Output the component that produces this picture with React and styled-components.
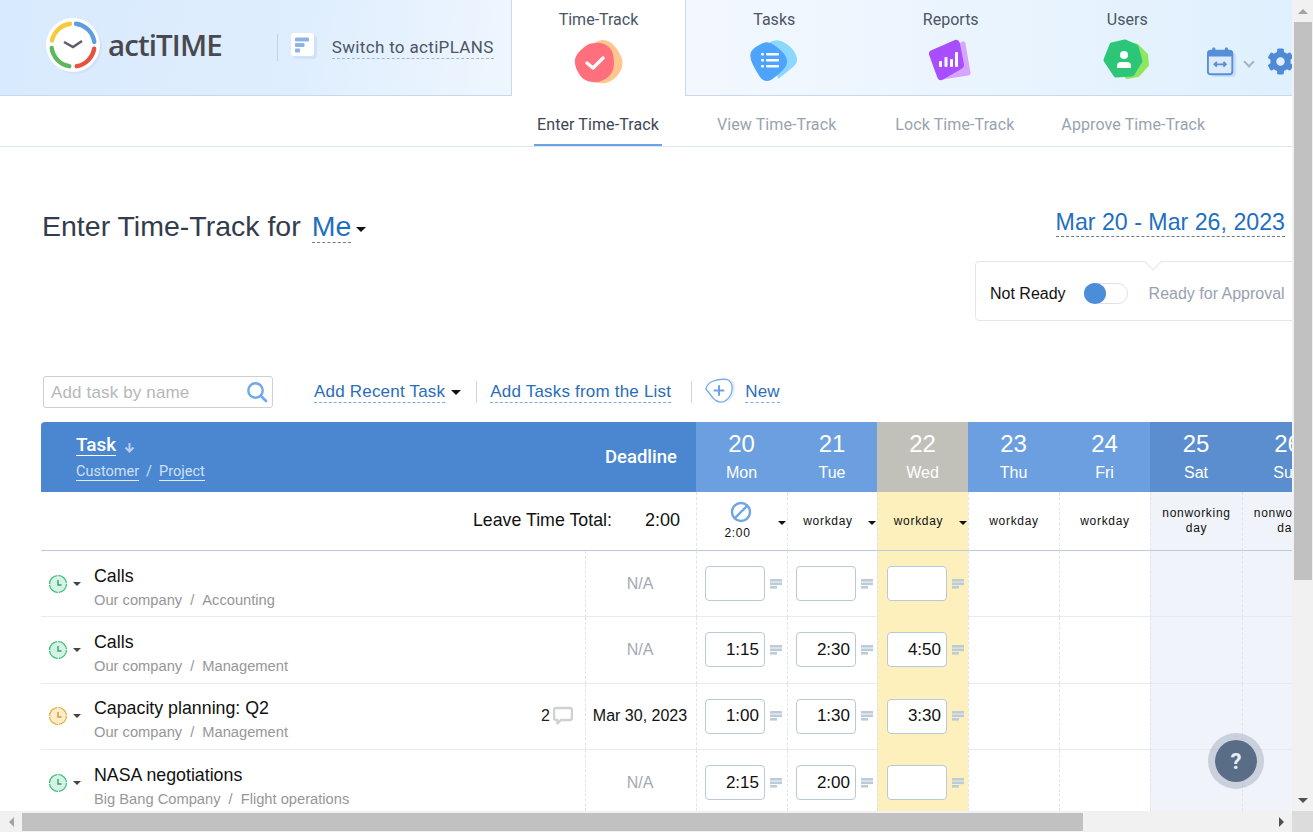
import React from 'react';
import styled, { createGlobalStyle } from 'styled-components';
import { FaCog } from 'react-icons/fa';

const GlobalStyle = createGlobalStyle`
  html, body {
    margin: 0;
    padding: 0;
    overflow: hidden;
    background: #fff;
  }
  * {
    box-sizing: border-box;
  }
`;

const ARIAL = `"Liberation Sans", Arial, sans-serif`;
const ROBOTO = `Roboto, "Liberation Sans", sans-serif`;

const rows = [
  { name: 'Calls', customer: 'Our company', project: 'Accounting', deadline: 'N/A', clock: 'green', times: ['', '', ''] },
  { name: 'Calls', customer: 'Our company', project: 'Management', deadline: 'N/A', clock: 'green', times: ['1:15', '2:30', '4:50'] },
  { name: 'Capacity planning: Q2', customer: 'Our company', project: 'Management', deadline: 'Mar 30, 2023', clock: 'orange', comments: 2, times: ['1:00', '1:30', '3:30'] },
  { name: 'NASA negotiations', customer: 'Big Bang Company', project: 'Flight operations', deadline: 'N/A', clock: 'green', times: ['2:15', '2:00', ''] },
];

const days = [
  { num: 20, name: 'Mon', kind: 'work' },
  { num: 21, name: 'Tue', kind: 'work' },
  { num: 22, name: 'Wed', kind: 'today' },
  { num: 23, name: 'Thu', kind: 'work' },
  { num: 24, name: 'Fri', kind: 'work' },
  { num: 25, name: 'Sat', kind: 'off' },
  { num: 26, name: 'Sun', kind: 'off' },
];

const polar = (r, a) => {
  const rad = ((a - 90) * Math.PI) / 180;
  return `${(r * Math.cos(rad)).toFixed(2)} ${(r * Math.sin(rad)).toFixed(2)}`;
};
const arc = (r, a0, a1) => `M${polar(r, a0)} A${r} ${r} 0 0 1 ${polar(r, a1)}`;

const Logo = () => (
  <svg width="62" height="62" viewBox="-30 -30 62 62">
    <circle cx="2" cy="2" r="27" fill="#cfe2f8" />
    <circle r="27" fill="#fff" />
    <g fill="none" strokeWidth="4.4" strokeLinecap="round">
      <path d={arc(21.5, 8, 82)} stroke="#5b9fe0" />
      <path d={arc(21.5, 100, 170)} stroke="#e9513f" />
      <path d={arc(21.5, 190, 262)} stroke="#5cb85c" />
      <path d={arc(21.5, 282, 352)} stroke="#f8c93f" />
    </g>
    <polyline points="-9,-3 0,2 9,-4" fill="none" stroke="#5c5c6a" strokeWidth="2.4" />
  </svg>
);

const PlansIcon = () => (
  <svg width="28" height="28" viewBox="0 0 28 28">
    <rect x="2" y="2" width="24" height="24" rx="4" fill="#cfe2fa" />
    <rect x="0" y="0" width="23" height="23" rx="3" fill="#fff" />
    <rect x="4" y="4.5" width="14" height="4" rx="1" fill="#8db4e2" />
    <rect x="4" y="10" width="9.5" height="4" rx="1" fill="#8db4e2" />
    <rect x="4" y="15.5" width="5" height="4" rx="1" fill="#8db4e2" />
  </svg>
);

const TimeTrackIcon = () => (
  <svg width="50" height="45" viewBox="0 0 50 45">
    <path d="M22 3 Q28 -1 36 3 Q42 7 47 17 Q50 24 47 31 Q42 41 32 44 Q24 45 18 42 Z" fill="#ffc68e" />
    <path d="M1 20 Q3 14 8 10 Q14 4 20 4 Q30 3 36 9 Q40 14 40 24 Q40 34 33 39 Q26 44 18 43 Q8 42 4 33 Q0 26 1 20 Z" fill="#ff707c" />
    <polyline points="13,24 19,29 29,19" fill="none" stroke="#fff" strokeWidth="3.4" strokeLinecap="round" strokeLinejoin="round" />
  </svg>
);

const TasksIcon = () => (
  <svg width="48" height="44" viewBox="0 0 48 44">
    <path d="M20 3 Q28 -1 35 4 Q43 9 46 16 Q49 23 43 28 Q36 34 28 40 Z" fill="#8ad7ff" />
    <path d="M1 13 Q4 8 11 5 Q18 1 24 6 Q33 12 36 18 Q39 25 33 31 Q27 37 21 41 Q14 44 10 38 Q6 32 3 26 Q-1 18 1 13 Z" fill="#4da3fd" />
    <g fill="#fff">
      <rect x="11" y="14" width="3" height="2.5" rx="1" />
      <rect x="16" y="14" width="13" height="2.5" rx="1" />
      <rect x="11" y="20" width="3" height="2.5" rx="1" />
      <rect x="16" y="20" width="13" height="2.5" rx="1" />
      <rect x="11" y="26" width="3" height="2.5" rx="1" />
      <rect x="16" y="26" width="13" height="2.5" rx="1" />
    </g>
  </svg>
);

const ReportsIcon = () => (
  <svg width="43" height="44" viewBox="0 0 43 44">
    <polygon points="14,20 34,5 39,34 13,38" fill="#d6a6ff" stroke="#d6a6ff" strokeWidth="5" strokeLinejoin="round" />
    <polygon points="4,15 27,5 31,26 12,37" fill="#a84dff" stroke="#a84dff" strokeWidth="8" strokeLinejoin="round" />
    <g fill="#fff">
      <rect x="10" y="22" width="3" height="6" rx="1" />
      <rect x="15.5" y="18" width="3" height="10" rx="1" />
      <rect x="21" y="20" width="3" height="8" rx="1" />
      <rect x="26" y="13" width="3" height="15" rx="1" />
    </g>
  </svg>
);

const UsersIcon = () => (
  <svg width="48" height="44" viewBox="0 0 48 44">
    <polygon points="24,4 34,7 43,16 44,26 35,36 24,38" fill="#90e65f" stroke="#90e65f" strokeWidth="4" strokeLinejoin="round" />
    <polygon points="9,6 22,3 33,8 37,22 29,35 13,36 3,21" fill="#2cc678" stroke="#2cc678" strokeWidth="5" strokeLinejoin="round" />
    <circle cx="21" cy="16" r="4" fill="#fff" />
    <path d="M14 29 v-2 q0 -4 4 -4 h6 q4 0 4 4 v2 z" fill="#fff" />
  </svg>
);

const CalendarIcon = () => (
  <svg width="30" height="30" viewBox="0 0 32 32">
    <rect x="4" y="6" width="27" height="26" rx="4" fill="#c9def8" />
    <rect x="1" y="4" width="26" height="25" rx="3" fill="#dceafb" stroke="#578ed8" strokeWidth="2" />
    <path d="M1 10 V7 a3 3 0 0 1 3 -3 H24 a3 3 0 0 1 3 3 V10 Z" fill="#578ed8" />
    <rect x="5.5" y="0.5" width="3.5" height="7" rx="1.5" fill="#578ed8" />
    <rect x="19" y="0.5" width="3.5" height="7" rx="1.5" fill="#578ed8" />
    <path d="M8 18.5 h12 M10.5 16 l-2.5 2.5 2.5 2.5 M17.5 16 l2.5 2.5 -2.5 2.5" fill="none" stroke="#578ed8" strokeWidth="2" />
  </svg>
);

const SearchIcon = () => (
  <svg width="22" height="22" viewBox="0 0 22 22">
    <circle cx="9.5" cy="9.5" r="7.2" fill="none" stroke="#6fa8ee" strokeWidth="2.4" />
    <path d="M15 15 L20 20" stroke="#6fa8ee" strokeWidth="2.8" strokeLinecap="round" />
  </svg>
);

const PlusBlob = () => (
  <svg width="32" height="26" viewBox="0 0 32 26">
    <path d="M8 3 Q17 0 25 1 Q31 3 30 12 Q29 21 21 24 Q14 26 9 20 Q4 15 1 11 Q2 6 8 3 Z" fill="#e3effc" />
    <path d="M7 3.5 Q15 .5 22 1.5 Q28 4 27 12 Q26 20 19 23.5 Q13 25.5 8 20 Q4 15 1 11 Q2 6 7 3.5 Z" fill="#fff" stroke="#79aaea" strokeWidth="1.3" />
    <path d="M14 8 v9 M9.5 12.5 h9" stroke="#6ba2e8" strokeWidth="2" strokeLinecap="round" />
  </svg>
);

const BlockedIcon = () => (
  <svg width="22" height="22" viewBox="0 0 22 22">
    <circle cx="11" cy="11" r="9" fill="none" stroke="#6ea4e8" strokeWidth="2.4" />
    <path d="M5 17 L17 5" stroke="#6ea4e8" strokeWidth="2.4" />
  </svg>
);

const clockColors = {
  green: { fill: '#d5f2e2', stroke: '#3cbd7c', hand: '#2aa866' },
  orange: { fill: '#fbeccd', stroke: '#e8ac3a', hand: '#e09a1e' },
};

const ClockIcon = ({ color }) => {
  const c = clockColors[color];
  return (
    <svg width="20" height="20" viewBox="0 0 20 20">
      <circle cx="10" cy="10" r="8.5" fill={c.fill} stroke={c.stroke} strokeWidth="1.2" strokeDasharray="12.3 1" />
      <polyline points="10,6 10,11 13.5,11" fill="none" stroke={c.hand} strokeWidth="1.4" />
    </svg>
  );
};

const CommentsLines = () => (
  <svg width="13" height="10" viewBox="0 0 13 10">
    <rect width="12" height="2.6" y="0" fill="#bccbd9" />
    <rect width="12" height="2.6" y="3.5" fill="#bccbd9" />
    <rect width="7" height="2.6" y="7" fill="#bccbd9" />
  </svg>
);

const BubbleIcon = () => (
  <svg width="20" height="20" viewBox="0 0 20 20">
    <path d="M3 2 H17 Q19 2 19 4 V12 Q19 14 17 14 H8 L4.5 17.5 V14 H3 Q1 14 1 12 V4 Q1 2 3 2 Z" fill="#fff" stroke="#d0d0d0" strokeWidth="2.4" strokeLinejoin="round" />
  </svg>
);

const Frame = styled.div`
  display: grid;
  grid-template-columns: 1292px 21px;
  grid-template-rows: 811px 21px;
  width: 1313px;
  height: 832px;
`;

const Sheet = styled.main`
  position: relative;
  width: 1292px;
  height: 811px;
  overflow: hidden;
`;

const TopBar = styled.header`
  display: flex;
  height: 96px;
`;

const BrandPanel = styled.div`
  display: flex;
  flex: none;
  align-items: center;
  width: 512px;
  padding-left: 43px;
  background: linear-gradient(100deg, #d8eafd 0%, #dfeefe 60%, #eff6fe 100%);
  border-right: 1px solid #c6d9ee;
  border-bottom: 1px solid #c6d9ee;
`;

const LogoWrap = styled.span`
  display: flex;
  margin-top: -4px;
`;

const BrandName = styled.span`
  margin: -7px 0 0 3px;
  font-family: "Open Sans", sans-serif;
  font-size: 29.5px;
  font-weight: 600;
  letter-spacing: -0.9px;
  color: #48484e;
`;

const BrandDivider = styled.span`
  width: 1px;
  height: 27px;
  margin: -1px 0 0 55px;
  background: #bfd3e8;
`;

const SwitchIcon = styled.span`
  display: flex;
  margin: -2px 13px 0 13px;
`;

const SwitchLink = styled.span`
  padding-bottom: 1px;
  font-family: ${ROBOTO};
  font-size: 17px;
  letter-spacing: 0.33px;
  color: #4b5565;
  border-bottom: 1px dashed #a9b4c2;
`;

const TabStrip = styled.nav`
  display: flex;
  flex: 1;
  min-width: 0;
  background: linear-gradient(90deg, #f3f8fe 0%, #eaf4fe 50%, #dff0fe 100%);
  border-bottom: 1px solid #c6d9ee;
`;

const Tab = styled.div`
  display: flex;
  flex: none;
  flex-direction: column;
  align-items: center;
  width: ${(p) => (p.$active ? '174px' : '176.5px')};
  height: ${(p) => (p.$active ? '96px' : '95px')};
  padding-top: 10px;
  font-family: ${ROBOTO};
  font-size: 16px;
  line-height: 19px;
  color: #4b5565;
  background: ${(p) => (p.$active ? '#fff' : 'transparent')};
  border-right: ${(p) => (p.$active ? '1px solid #c6d9ee' : 'none')};
`;

const TabIcon = styled.span`
  display: flex;
  margin-top: 10px;
`;

const TopTools = styled.div`
  display: flex;
  align-items: center;
  flex: none;
  height: 30px;
  margin: 47px 0 0 -9px;
  color: #4f8ad6;
`;

const Chevron = styled.span`
  width: 8px;
  height: 8px;
  margin: 0 14px 0 8px;
  border-right: 2.5px solid #aab4bf;
  border-bottom: 2.5px solid #aab4bf;
  transform: rotate(45deg);
`;

const GearWrap = styled.span`
  display: flex;
  margin-top: -2px;
`;

const SubNav = styled.nav`
  display: flex;
  height: 51px;
  padding-left: 534px;
  border-bottom: 1px solid #dce6ee;
`;

const SubNavItem = styled.div`
  height: 50px;
  margin-right: ${(p) => p.$gap}px;
  padding: 19px 3px 0;
  font-family: ${ROBOTO};
  font-size: 16px;
  line-height: 19px;
  letter-spacing: 0.1px;
  white-space: nowrap;
  color: ${(p) => (p.$active ? '#3c4656' : '#98a3b0')};
  border-bottom: ${(p) => (p.$active ? '2px solid #6ca2e8' : 'none')};
`;

const TitleRow = styled.section`
  display: flex;
  justify-content: space-between;
  align-items: flex-start;
  height: 229px;
  padding: 61px 7px 0 42px;
`;

const PageTitle = styled.h1`
  display: flex;
  align-items: baseline;
  margin: 0;
  font-family: ${ARIAL};
  font-size: 28.5px;
  line-height: 36px;
  font-weight: 400;
  color: #333c4b;
`;

const TitleLink = styled.span`
  margin-left: 11px;
  font-size: 28.5px;
  line-height: 32px;
  color: #1f6fc0;
  border-bottom: 1px dashed #6f7c8c;
`;

const Caret = styled.span`
  display: inline-block;
  flex: none;
  width: 0;
  height: 0;
  border-left: ${(p) => p.$size}px solid transparent;
  border-right: ${(p) => p.$size}px solid transparent;
  border-top: ${(p) => p.$size}px solid ${(p) => p.$color || '#111'};
`;

const TitleCaret = styled(Caret)`
  margin-left: 5px;
  align-self: center;
  margin-top: 7px;
`;

const PeriodColumn = styled.div`
  display: flex;
  flex-direction: column;
  align-items: flex-end;
`;

const PeriodLink = styled.span`
  font-family: ${ARIAL};
  font-size: 23.2px;
  line-height: 28px;
  color: #1f6fc0;
  border-bottom: 1px dashed #6f7c8c;
`;

const StatusWrap = styled.div`
  width: 310px;
`;

const StatusBox = styled.div`
  position: relative;
  display: flex;
  align-items: center;
  width: 340px;
  height: 60px;
  margin-top: 24px;
  padding: 6px 0 0 14px;
  font-family: ${ARIAL};
  font-size: 16px;
  background: #fff;
  border: 1px solid #e6e6e6;
  border-radius: 4px;

  &::before {
    content: '';
    position: absolute;
    top: -6px;
    left: 171px;
    width: 11px;
    height: 11px;
    background: #fff;
    border-right: 1px solid #e6e6e6;
    border-bottom: 1px solid #e6e6e6;
    transform: rotate(45deg);
  }
`;

const StatusOn = styled.span`
  color: #111;
`;

const StatusOff = styled.span`
  color: #97a2af;
`;

const Toggle = styled.span`
  display: flex;
  width: 44px;
  height: 21px;
  margin: -2px 21px 0 18px;
  border: 1px solid #e0e0e0;
  border-radius: 11px;

  &::before {
    content: '';
    width: 22px;
    height: 21px;
    margin: -1px 0 0 -1px;
    background: #4a8dd8;
    border-radius: 50%;
  }
`;

const Toolbar = styled.section`
  display: flex;
  align-items: center;
  height: 32px;
  margin-bottom: 14px;
  padding-left: 43px;
  font-family: ${ARIAL};
  font-size: 17px;
`;

const SearchBox = styled.label`
  display: flex;
  align-items: center;
  justify-content: space-between;
  width: 230px;
  height: 32px;
  margin-right: 41px;
  padding: 0 4px 0 7px;
  border: 1px solid #c9d0db;
  border-radius: 3px;
`;

const SearchInput = styled.input`
  width: 180px;
  margin-top: 1px;
  border: 0;
  outline: 0;
  padding: 0;
  font: inherit;
  letter-spacing: 0.15px;

  &::placeholder {
    color: #b7b7b7;
    opacity: 1;
  }
`;

const ActionLink = styled.span`
  line-height: 20px;
  color: #2a6db8;
  letter-spacing: 0.2px;
  border-bottom: 1px dashed #79aaea;
`;

const ToolSeparator = styled.span`
  width: 1px;
  height: 22px;
  margin: 0 ${(p) => p.$right}px 0 ${(p) => p.$left}px;
  background: #cfd4da;
`;

const ToolbarCaret = styled(Caret)`
  margin-left: 6px;
`;

const PlusWrap = styled.span`
  display: flex;
  margin-right: 8px;
  margin-top: -2px;
`;

const Table = styled.section`
  width: 1292px;
  margin-left: 41px;
`;

const COLUMNS = '544px 111px 91px 90px 91px 91px 91px 92px 91px';

const HeadRow = styled.div`
  display: grid;
  grid-template-columns: ${COLUMNS};
  height: 70px;
  color: #fff;
`;

const TaskHead = styled.div`
  padding: 13px 0 0 35px;
  font-family: ${ROBOTO};
  background: #4a87d0;
  border-top-left-radius: 4px;
`;

const HeadTitle = styled.div`
  display: flex;
  align-items: center;
  font-size: 19px;
  font-weight: 500;
  line-height: 20px;
`;

const Underlined = styled.span`
  border-bottom: 1px solid ${(p) => p.$color};
`;

const SortArrow = styled.svg`
  margin: 3px 0 0 8px;
`;

const HeadSub = styled.div`
  display: flex;
  gap: 7px;
  margin-top: 7px;
  font-size: 14.5px;
  line-height: 17px;
  color: #cfe0f6;
`;

const DeadlineHead = styled.div`
  display: flex;
  align-items: center;
  justify-content: flex-end;
  padding-right: 19px;
  font-family: ${ROBOTO};
  font-size: 18.5px;
  font-weight: 500;
  background: #4a87d0;
`;

const dayHeadColors = { work: '#6b9fe0', today: '#c2c1b9', off: '#5b8ecf' };

const DayHead = styled.div`
  display: flex;
  flex-direction: column;
  align-items: center;
  padding-top: 8px;
  font-family: ${ARIAL};
  background: ${(p) => dayHeadColors[p.$kind]};
`;

const DayNumber = styled.span`
  font-size: 24px;
  line-height: 28px;
`;

const DayName = styled.span`
  margin-top: 5px;
  font-size: 16px;
  line-height: 19px;
`;

const dayBackgrounds = { work: '#fff', today: '#fdf0bd', off: '#f0f3f9' };

const GridRow = styled.div`
  display: grid;
  grid-template-columns: ${COLUMNS};
  height: ${(p) => p.$height}px;
  font-family: ${ARIAL};
`;

const SummaryLabel = styled.div`
  grid-column: span 2;
  display: flex;
  align-items: center;
  justify-content: flex-end;
  gap: 33px;
  padding: 0 16px 1px 0;
  font-size: 17.8px;
  color: #111;
  border-bottom: 1px solid #b9cadb;
`;

const SummaryTotal = styled.span`
  font-size: 18px;
`;

const SummaryDay = styled.div`
  display: flex;
  align-items: center;
  padding-right: ${(p) => (p.$caret ? '1px' : '0')};
  font-size: 12px;
  line-height: 15px;
  letter-spacing: 0.7px;
  text-align: center;
  color: #111;
  background: ${(p) => dayBackgrounds[p.$kind]};
  border-left: 1px dashed #dfe4ec;
  border-bottom: 1px solid #b9cadb;
`;

const SummaryText = styled.div`
  flex: 1;
  display: flex;
  flex-direction: column;
  align-items: center;
`;

const SummaryCaret = styled(Caret)`
  margin-top: 3px;
`;

const LeaveIcon = styled.span`
  display: flex;
  margin: 0 0 3px 6px;
`;

const TaskCell = styled.div`
  display: flex;
  align-items: center;
  padding-left: 7px;
  border-bottom: 1px solid #e6ebf2;
`;

const ClockWrap = styled.span`
  display: flex;
  margin: 0 5px 0 0;
`;

const TaskText = styled.div`
  flex: 1;
  margin-left: 13px;
  padding-top: 6px;
`;

const TaskName = styled.div`
  font-size: 17.8px;
  line-height: 22px;
  color: #111;
`;

const TaskPath = styled.div`
  display: flex;
  margin-top: 4px;
  font-size: 14.7px;
  line-height: 18px;
  color: #979797;
`;

const PathSlash = styled.span`
  margin: 0 8px;
`;

const CommentCount = styled.div`
  display: flex;
  align-items: center;
  gap: 3px;
  margin-right: 12px;
  font-size: 16px;
  color: #222;
`;

const DeadlineCell = styled.div`
  display: flex;
  align-items: center;
  justify-content: center;
  padding-right: 2px;
  font-size: 16px;
  color: ${(p) => (p.$empty ? '#a3a9b2' : '#111')};
  border-left: 1px dashed #dfe4ec;
  border-bottom: 1px solid #e6ebf2;
`;

const DayCell = styled.div`
  display: flex;
  align-items: center;
  padding-left: ${(p) => (p.$kind === 'today' ? '9px' : '8px')};
  background: ${(p) => dayBackgrounds[p.$kind]};
  border-left: 1px dashed #dfe4ec;
  border-bottom: 1px solid ${(p) => (p.$kind === 'today' ? '#fdf0bd' : '#e6ebf2')};
`;

const TimeInput = styled.input`
  width: 60px;
  height: 35px;
  padding: 0 5px 0 0;
  font-family: ${ARIAL};
  font-size: 17px;
  text-align: right;
  color: #111;
  background: #fff;
  border: 1px solid #b9c9d8;
  border-radius: 4px;
  outline: 0;
`;

const LinesWrap = styled.span`
  display: flex;
  margin-left: 5px;
`;

const HelpButton = styled.div`
  position: absolute;
  left: 1208px;
  top: 733px;
  display: flex;
  align-items: center;
  justify-content: center;
  width: 56px;
  height: 56px;
  font-family: ${ROBOTO};
  font-size: 22px;
  font-weight: 700;
  color: #e8edf3;
  background: #5a6d87;
  background-clip: padding-box;
  border: 7px solid rgba(90, 109, 135, 0.25);
  border-radius: 50%;
`;

const VerticalBar = styled.div`
  display: flex;
  flex-direction: column;
  align-items: center;
  background: #f1f1f1;
`;

const HorizontalBar = styled.div`
  display: flex;
  align-items: center;
  background: #f1f1f1;
`;

const ArrowSlot = styled.span`
  display: flex;
  flex: none;
  align-items: center;
  justify-content: center;
  width: ${(p) => p.$w}px;
  height: ${(p) => p.$h}px;
`;

const VerticalThumb = styled.span`
  width: 18px;
  height: 558px;
  background: #c1c1c1;
`;

const HorizontalThumb = styled.span`
  width: 1061px;
  height: 18px;
  background: #c1c1c1;
`;

const BarSpacer = styled.span`
  flex: 1;
`;

const Corner = styled.div`
  background: #dcdcdc;
`;

const ArrowUp = styled.span`
  border-left: 5px solid transparent;
  border-right: 5px solid transparent;
  border-bottom: 5px solid ${(p) => p.$color};
`;

const ArrowDown = styled.span`
  border-left: 5px solid transparent;
  border-right: 5px solid transparent;
  border-top: 5px solid ${(p) => p.$color};
`;

const ArrowLeft = styled.span`
  border-top: 5px solid transparent;
  border-bottom: 5px solid transparent;
  border-right: 5px solid ${(p) => p.$color};
`;

const ArrowRight = styled.span`
  border-top: 5px solid transparent;
  border-bottom: 5px solid transparent;
  border-left: 5px solid ${(p) => p.$color};
`;

const tabs = [
  { label: 'Tasks', icon: <TasksIcon /> },
  { label: 'Reports', icon: <ReportsIcon /> },
  { label: 'Users', icon: <UsersIcon /> },
];

const summaries = ['workday', 'workday', 'workday', 'workday', 'nonworking day', 'nonworking day'];

const TaskRow = ({ row }) => (
  <GridRow $height={66.33}>
    <TaskCell>
      <ClockWrap>
        <ClockIcon color={row.clock} />
      </ClockWrap>
      <Caret $size={4} $color="#444" />
      <TaskText>
        <TaskName>{row.name}</TaskName>
        <TaskPath>
          {row.customer}
          <PathSlash>/</PathSlash>
          {row.project}
        </TaskPath>
      </TaskText>
      {row.comments && (
        <CommentCount>
          {row.comments}
          <BubbleIcon />
        </CommentCount>
      )}
    </TaskCell>
    <DeadlineCell $empty={row.deadline === 'N/A'}>{row.deadline}</DeadlineCell>
    {days.map((day, i) => (
      <DayCell key={day.num} $kind={day.kind}>
        {i < 3 && (
          <>
            <TimeInput readOnly value={row.times[i]} />
            <LinesWrap>
              <CommentsLines />
            </LinesWrap>
          </>
        )}
      </DayCell>
    ))}
  </GridRow>
);

const App = () => {
  return (
    <Frame>
      <GlobalStyle />
      <Sheet>
        <TopBar>
          <BrandPanel>
            <LogoWrap>
              <Logo />
            </LogoWrap>
            <BrandName>actiTIME</BrandName>
            <BrandDivider />
            <SwitchIcon>
              <PlansIcon />
            </SwitchIcon>
            <SwitchLink>Switch to actiPLANS</SwitchLink>
          </BrandPanel>
          <Tab $active>
            Time-Track
            <TabIcon>
              <TimeTrackIcon />
            </TabIcon>
          </Tab>
          <TabStrip>
            {tabs.map((tab) => (
              <Tab key={tab.label}>
                {tab.label}
                <TabIcon>{tab.icon}</TabIcon>
              </Tab>
            ))}
            <TopTools>
              <CalendarIcon />
              <Chevron />
              <GearWrap>
                <FaCog size={27} />
              </GearWrap>
            </TopTools>
          </TabStrip>
        </TopBar>

        <SubNav>
          <SubNavItem $active $gap={52}>Enter Time-Track</SubNavItem>
          <SubNavItem $gap={53}>View Time-Track</SubNavItem>
          <SubNavItem $gap={41}>Lock Time-Track</SubNavItem>
          <SubNavItem $gap={0}>Approve Time-Track</SubNavItem>
        </SubNav>

        <TitleRow>
          <PageTitle>
            Enter Time-Track for
            <TitleLink>Me</TitleLink>
            <TitleCaret $size={5} />
          </PageTitle>
          <PeriodColumn>
            <PeriodLink>Mar 20 - Mar 26, 2023</PeriodLink>
            <StatusWrap>
              <StatusBox>
                <StatusOn>Not Ready</StatusOn>
                <Toggle />
                <StatusOff>Ready for Approval</StatusOff>
              </StatusBox>
            </StatusWrap>
          </PeriodColumn>
        </TitleRow>

        <Toolbar>
          <SearchBox>
            <SearchInput placeholder="Add task by name" />
            <SearchIcon />
          </SearchBox>
          <ActionLink>Add Recent Task</ActionLink>
          <ToolbarCaret $size={5} />
          <ToolSeparator $left={15} $right={13} />
          <ActionLink>Add Tasks from the List</ActionLink>
          <ToolSeparator $left={20} $right={13} />
          <PlusWrap>
            <PlusBlob />
          </PlusWrap>
          <ActionLink>New</ActionLink>
        </Toolbar>

        <Table>
          <HeadRow>
            <TaskHead>
              <HeadTitle>
                <Underlined $color="#fff">Task</Underlined>
                <SortArrow width="11" height="11" viewBox="0 0 11 11">
                  <path d="M5.5 1 V8 M1.5 5.5 L5.5 9.5 L9.5 5.5" fill="none" stroke="#b6cfee" strokeWidth="2" />
                </SortArrow>
              </HeadTitle>
              <HeadSub>
                <Underlined $color="#e3edfa">Customer</Underlined>
                <span>/</span>
                <Underlined $color="#e3edfa">Project</Underlined>
              </HeadSub>
            </TaskHead>
            <DeadlineHead>Deadline</DeadlineHead>
            {days.map((day) => (
              <DayHead key={day.num} $kind={day.kind}>
                <DayNumber>{day.num}</DayNumber>
                <DayName>{day.name}</DayName>
              </DayHead>
            ))}
          </HeadRow>

          <GridRow $height={59}>
            <SummaryLabel>
              Leave Time Total:
              <SummaryTotal>2:00</SummaryTotal>
            </SummaryLabel>
            <SummaryDay $kind="work" $caret>
              <SummaryText>
                <LeaveIcon>
                  <BlockedIcon />
                </LeaveIcon>
                <span>2:00</span>
              </SummaryText>
              <SummaryCaret $size={4} />
            </SummaryDay>
            {summaries.map((text, i) => (
              <SummaryDay key={i} $kind={days[i + 1].kind} $caret={i < 2}>
                <SummaryText>{text}</SummaryText>
                {i < 2 && <SummaryCaret $size={4} />}
              </SummaryDay>
            ))}
          </GridRow>

          {rows.map((row, i) => (
            <TaskRow key={i} row={row} />
          ))}
        </Table>

        <HelpButton>?</HelpButton>
      </Sheet>

      <VerticalBar>
        <ArrowSlot $w={21} $h={22}>
          <ArrowUp $color="#a3a3a3" />
        </ArrowSlot>
        <VerticalThumb />
        <BarSpacer />
        <ArrowSlot $w={21} $h={22}>
          <ArrowDown $color="#505050" />
        </ArrowSlot>
      </VerticalBar>

      <HorizontalBar>
        <ArrowSlot $w={22} $h={21}>
          <ArrowLeft $color="#a3a3a3" />
        </ArrowSlot>
        <HorizontalThumb />
        <BarSpacer />
        <ArrowSlot $w={22} $h={21}>
          <ArrowRight $color="#505050" />
        </ArrowSlot>
      </HorizontalBar>
      <Corner />
    </Frame>
  );
};

export default App;
